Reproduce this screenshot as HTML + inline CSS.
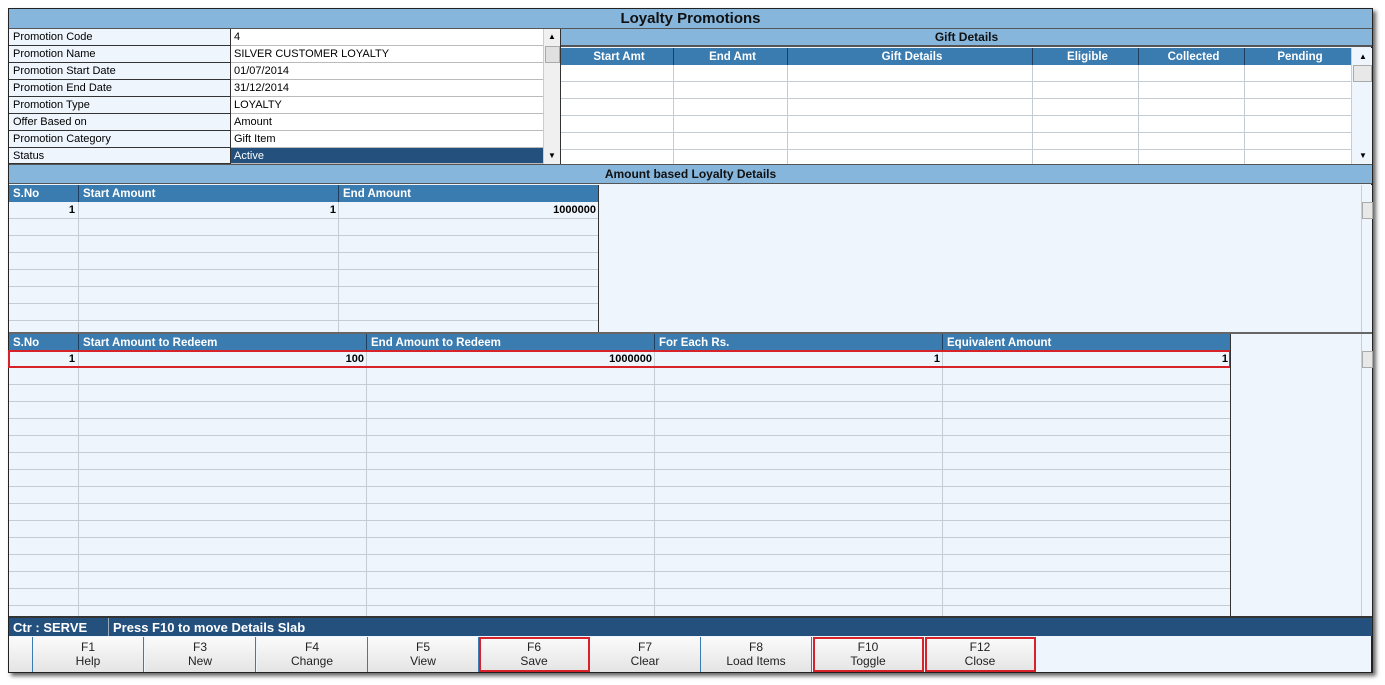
<!DOCTYPE html>
<html><head><meta charset="utf-8"><style>
*{margin:0;padding:0;box-sizing:border-box}
body{width:1385px;height:685px;background:#fff;font-family:"Liberation Sans",sans-serif;font-size:11px;position:relative;overflow:hidden}
.a{position:absolute}
#frame{left:8px;top:8px;width:1365px;height:665px;border:1px solid #222;border-right:2px solid #222;background:#eef5fd;box-shadow:3px 3px 4px #666}
.band{background:#86b6dc;text-align:center;font-weight:bold;color:#111}
.hdr{background:#3a7bb0;color:#fff;font-weight:bold;font-size:11.5px;line-height:18px}
.hdr span{position:absolute;top:0;padding-left:4px;height:17px;border-left:1px solid #1f3f60}
.rows{background:repeating-linear-gradient(to bottom,transparent 0,transparent 16px,#c5ccd4 16px,#c5ccd4 17px)}
.vl{position:absolute;top:0;bottom:0;width:1px;background:#c5ccd4}
.sb{background:#eef5fd;border-left:1px solid #ccc}
.lab{left:9px;width:222px;height:17px;line-height:17px;padding-left:4px;background:#eef5fd;border-bottom:1px solid #333;border-right:1px solid #333}
.val{left:231px;width:312px;height:17px;line-height:17px;padding-left:3px;background:#fff;border-bottom:1px solid #bbb}
.num{position:absolute;font-weight:bold;text-align:right;line-height:17px}
.btn{top:637px;height:35px;width:111px;text-align:center;line-height:14px;padding-top:3px;background:linear-gradient(#fbfbfb,#e4e4e4);border-right:1px solid #3a7bb0;font-size:12px;color:#222}
.red{outline:2px solid #d8222a;outline-offset:-2px}
.arr{position:absolute;font-size:8px;left:4px}
</style></head><body>
<div id="frame" class="a"></div>
<div class="a band" style="left:9px;top:9px;width:1363px;height:20px;font-size:15px;line-height:20px;border-bottom:1px solid #555">Loyalty Promotions</div>

<div class="a lab" style="top:29px">Promotion Code</div><div class="a val" style="top:29px">4</div>
<div class="a lab" style="top:46px">Promotion Name</div><div class="a val" style="top:46px">SILVER CUSTOMER LOYALTY</div>
<div class="a lab" style="top:63px">Promotion Start Date</div><div class="a val" style="top:63px">01/07/2014</div>
<div class="a lab" style="top:80px">Promotion End Date</div><div class="a val" style="top:80px">31/12/2014</div>
<div class="a lab" style="top:97px">Promotion Type</div><div class="a val" style="top:97px">LOYALTY</div>
<div class="a lab" style="top:114px">Offer Based on</div><div class="a val" style="top:114px">Amount</div>
<div class="a lab" style="top:131px">Promotion Category</div><div class="a val" style="top:131px">Gift Item</div>
<div class="a lab" style="top:148px;height:16px">Status</div><div class="a val" style="top:148px;height:16px;background:#24507e;color:#fff">Active</div>
<div class="a sb" style="left:543px;top:29px;width:17px;height:135px;background:#f0f0f0"><div class="a" style="top:17px;left:1px;width:15px;height:17px;background:#e0e0e0;border:1px solid #aaa"></div><span class="arr" style="top:3px">▲</span><span class="arr" style="top:122px">▼</span></div>
<div class="a" style="left:560px;top:29px;width:1px;height:136px;background:#333"></div>

<div class="a band" style="left:561px;top:29px;width:811px;height:18px;font-size:12px;line-height:17px;font-weight:bold;border-bottom:2px solid #555">Gift Details</div>
<div class="a hdr" style="left:561px;top:48px;width:790px;height:17px;text-align:center">
<span style="left:0;width:112px;border:0">Start Amt</span><span style="left:112px;width:114px">End Amt</span><span style="left:226px;width:245px">Gift Details</span><span style="left:471px;width:106px">Eligible</span><span style="left:577px;width:106px">Collected</span><span style="left:683px;width:107px">Pending</span></div>
<div class="a rows" style="left:561px;top:65px;width:790px;height:99px;background-color:#fff">
<div class="vl" style="left:112px"></div><div class="vl" style="left:226px"></div><div class="vl" style="left:471px"></div><div class="vl" style="left:577px"></div><div class="vl" style="left:683px"></div></div>
<div class="a sb" style="left:1351px;top:48px;width:21px;height:116px"><div class="a" style="top:17px;left:1px;width:19px;height:17px;background:#e8e8e8;border:1px solid #aaa"></div><span class="arr" style="top:4px;left:7px">▲</span><span class="arr" style="top:103px;left:7px">▼</span></div>

<div class="a band" style="left:9px;top:164px;width:1363px;height:20px;font-size:12px;line-height:18px;border-top:1px solid #555;border-bottom:1px solid #555">Amount based Loyalty Details</div>
<div class="a hdr" style="left:9px;top:185px;width:589px;height:17px">
<span style="left:0;width:69px;border:0">S.No</span><span style="left:69px;width:260px">Start Amount</span><span style="left:329px;width:260px">End Amount</span></div>
<div class="a rows" style="left:9px;top:202px;width:589px;height:130px">
<div class="vl" style="left:69px"></div><div class="vl" style="left:329px"></div>
<div class="num" style="left:0;width:66px;top:0">1</div><div class="num" style="left:69px;width:258px;top:0">1</div><div class="num" style="left:329px;width:258px;top:0">1000000</div></div>
<div class="a" style="left:598px;top:185px;width:1px;height:147px;background:#333"></div>
<div class="a sb" style="left:1361px;top:185px;width:11px;height:147px"><div class="a" style="top:17px;left:0;width:11px;height:17px;background:#e8e8e8;border:1px solid #aaa"></div></div>
<div class="a" style="left:9px;top:332px;width:1363px;height:2px;background:#666"></div>

<div class="a hdr" style="left:9px;top:334px;width:1221px;height:17px">
<span style="left:0;width:69px;border:0">S.No</span><span style="left:69px;width:288px">Start Amount to Redeem</span><span style="left:357px;width:288px">End Amount to Redeem</span><span style="left:645px;width:288px">For Each Rs.</span><span style="left:933px;width:288px">Equivalent Amount</span></div>
<div class="a rows" style="left:9px;top:351px;width:1221px;height:265px">
<div class="vl" style="left:69px"></div><div class="vl" style="left:357px"></div><div class="vl" style="left:645px"></div><div class="vl" style="left:933px"></div>
<div class="num" style="left:0;width:66px;top:0">1</div><div class="num" style="left:69px;width:286px;top:0">100</div><div class="num" style="left:357px;width:286px;top:0">1000000</div><div class="num" style="left:645px;width:286px;top:0">1</div><div class="num" style="left:933px;width:286px;top:0">1</div></div>
<div class="a" style="left:8px;top:350px;width:1223px;height:18px;border:2px solid #d8222a"></div>
<div class="a" style="left:1230px;top:334px;width:1px;height:282px;background:#333"></div>
<div class="a sb" style="left:1361px;top:334px;width:11px;height:282px"><div class="a" style="top:17px;left:0;width:11px;height:17px;background:#e8e8e8;border:1px solid #aaa"></div></div>

<div class="a" style="left:9px;top:616px;width:1363px;height:20px;background:#24507e;color:#fff;font-weight:bold;font-size:13px;line-height:20px;border-top:2px solid #333">
<span class="a" style="left:4px">Ctr : SERVE</span><span class="a" style="left:99px;top:0;height:18px;border-left:1px solid #9ab"></span><span class="a" style="left:104px">Press F10 to move Details Slab</span></div>

<div class="a" style="left:9px;top:637px;width:24px;height:35px;border-right:1px solid #3a7bb0;background:linear-gradient(#fbfbfb,#e4e4e4)"></div>
<div class="a btn" style="left:33px">F1<br>Help</div>
<div class="a btn" style="left:145px">F3<br>New</div>
<div class="a btn" style="left:257px">F4<br>Change</div>
<div class="a btn" style="left:368px">F5<br>View</div>
<div class="a btn red" style="left:479px">F6<br>Save</div>
<div class="a btn" style="left:590px">F7<br>Clear</div>
<div class="a btn" style="left:701px">F8<br>Load Items</div>
<div class="a btn red" style="left:813px">F10<br>Toggle</div>
<div class="a btn red" style="left:925px">F12<br>Close</div>
</body></html>
